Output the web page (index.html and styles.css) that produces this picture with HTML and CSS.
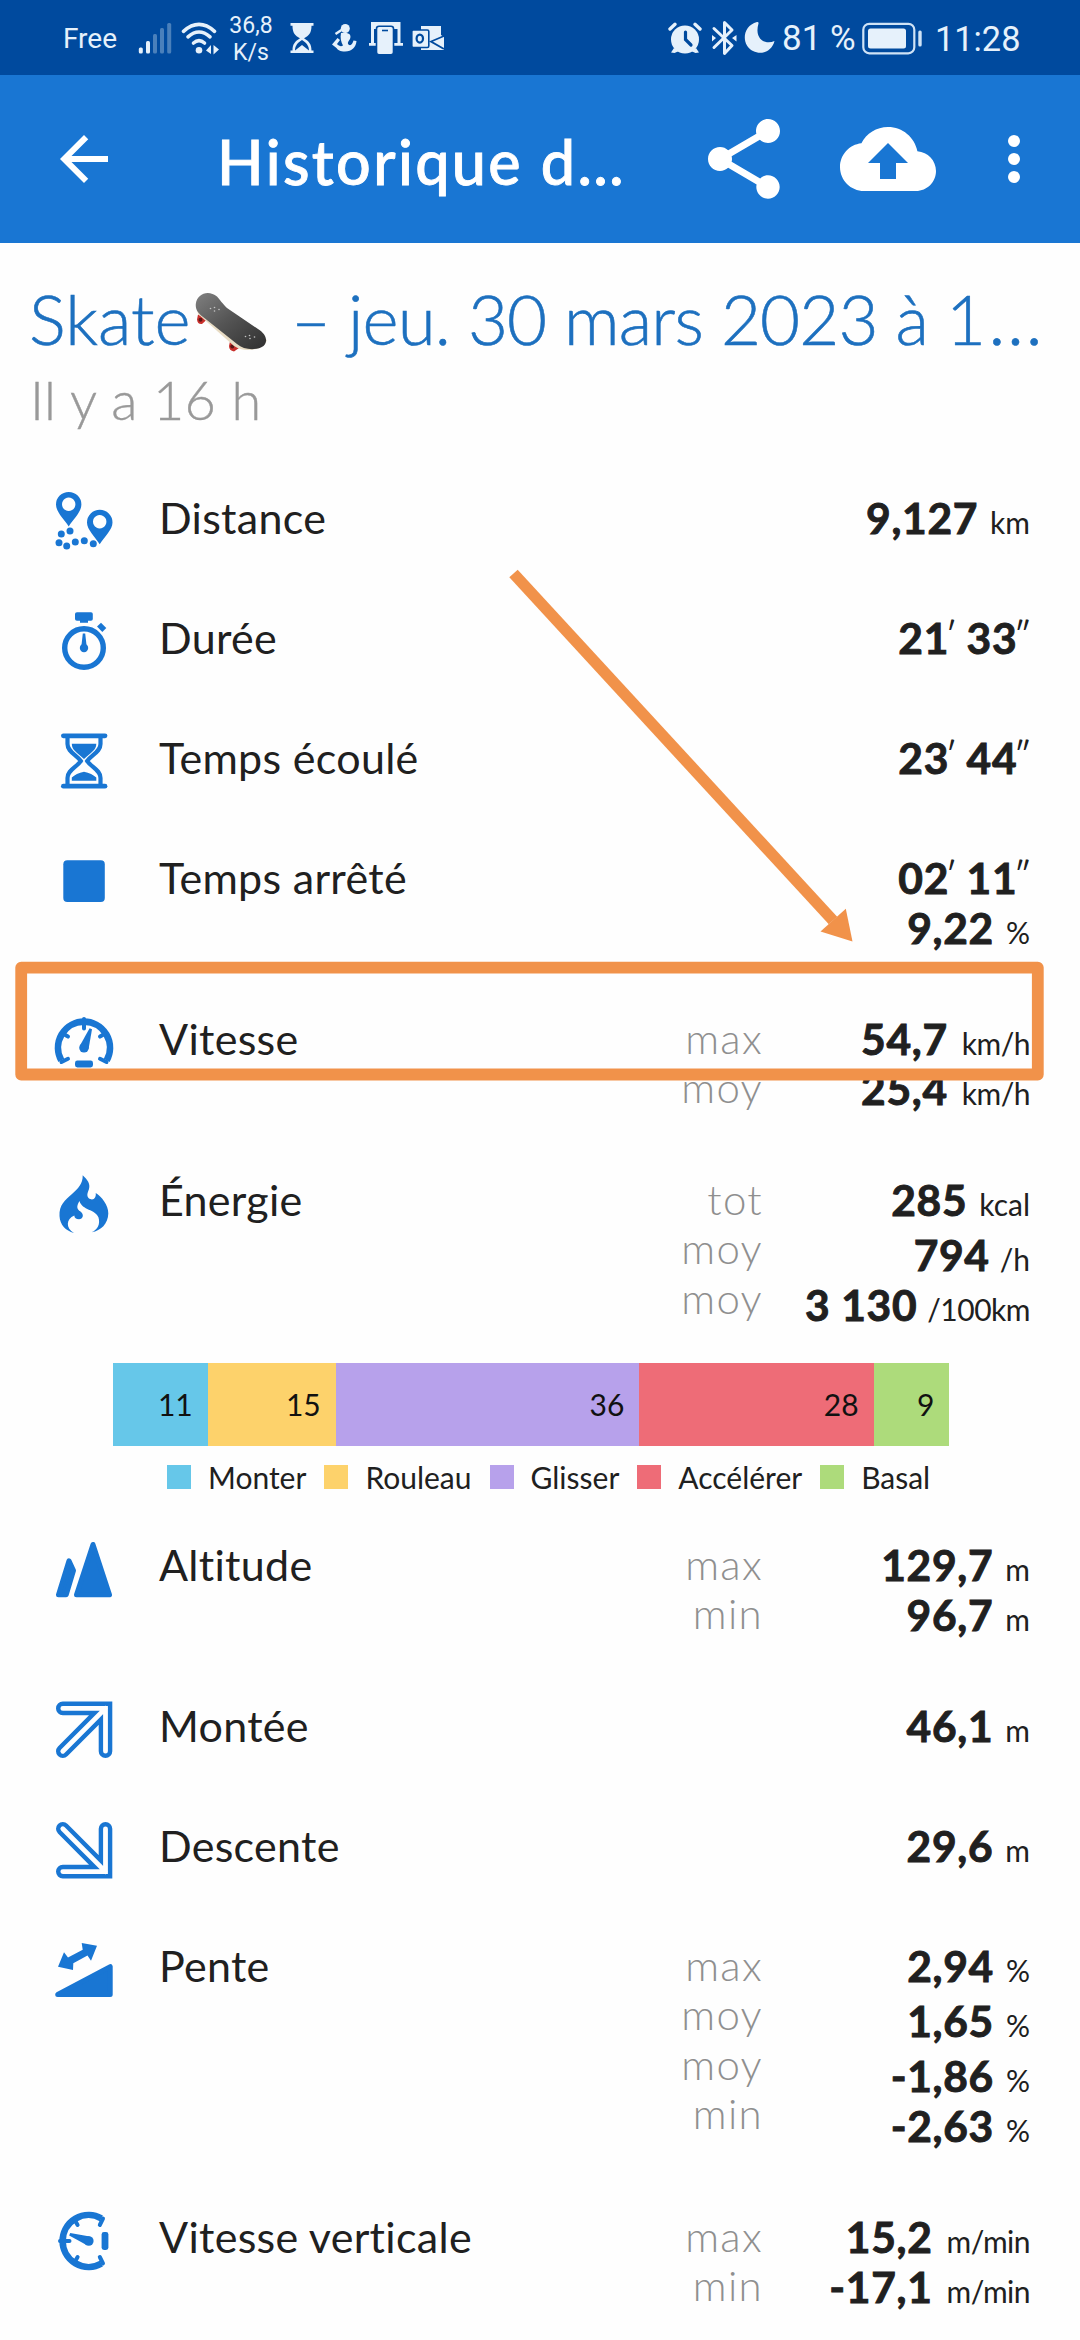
FILE: index.html
```
<!DOCTYPE html>
<html lang="fr">
<head>
<meta charset="utf-8">
<title>Historique</title>
<link rel="stylesheet" href="styles.css">
</head>
<body>
<svg width="0" height="0" class="defs" aria-hidden="true">
  <symbol id="gauge" viewBox="0 0 64 64">
    <path d="M9.3 49.3A26 26 0 1 1 54.7 49.3" fill="none" stroke="currentColor" stroke-width="6.6"/>
    <path d="M32 8V17.5M11 22.8L16 25.6M53 22.8L48 25.6M9.5 51L16 47.8M54.5 51L48 47.8" stroke="currentColor" stroke-width="4" stroke-linecap="round" fill="none"/>
    <path d="M37.6 17.2L40 18.2L36.6 37.8L27.7 35Z" fill="currentColor"/>
    <circle cx="32" cy="36.8" r="4.8" fill="currentColor"/>
    <rect x="23" y="49.6" width="18" height="6.8" rx="2.4" fill="currentColor"/>
  </symbol>
  <symbol id="arrow-ne" viewBox="0 0 64 64">
    <path d="M10.8 10.4H53.5V53.2M53.5 10.4L10.8 53.2" fill="none" stroke="currentColor" stroke-width="13.6" stroke-linecap="round"/>
    <path d="M10.8 10.4H53.5V53.2M53.5 10.4L10.8 53.2" fill="none" stroke="#fefefe" stroke-width="4.8" stroke-linecap="round"/>
  </symbol>
</svg>

<header class="statusbar">
  <div class="status-left">
    <span class="carrier">Free</span>
    <svg class="signal" viewBox="138 20 34 34" width="34" height="34"><g fill="#e6f1fb"><rect x="138.8" y="46.5" width="4" height="6" rx="1.5"/><rect x="146" y="40" width="4" height="12.5" rx="1.5"/></g><g fill="#4a80bb"><rect x="153" y="33" width="4" height="19.5" rx="1.5"/><rect x="160" y="27" width="4" height="25.5" rx="1.5"/><rect x="167.2" y="22" width="4" height="30.5" rx="1.5"/></g></svg>
    <svg class="wifi" viewBox="181 20 38 34" width="38" height="34"><g fill="none" stroke="#e6f1fb" stroke-width="3.6" stroke-linecap="round"><path d="M183.5 30.3Q199 16.5 214.5 30.3"/><path d="M188 35.8Q199 26.2 210 35.8"/><path d="M193.5 42Q199 37.3 204.5 42"/></g><circle cx="199" cy="49.3" r="3.3" fill="#e6f1fb"/><path d="M206 49.5L211 44V53ZM219 48.5L213.5 53.5V44Z" fill="#e6f1fb"/></svg>
    <div class="rate"><span>36,8</span><span>K/s</span></div>
    <svg class="hour" viewBox="290 22 24 32" width="24" height="32"><path d="M290.5 23H313.5V25.8H311.5C311.5 33 309 35.5 304 38.3C309 41.5 311.5 44 311.5 50.6H313.5V53H290.5V50.6H292.5C292.5 44 295 41.5 300 38.3C295 35.5 292.5 33 292.5 25.8H290.5Z" fill="#e6f1fb"/><path d="M295 50.5C295 45.5 298 42.5 302 40C306 42.5 309 45.5 309 50.5L302 45Z" fill="#004a9e"/></svg>
    <svg class="person" viewBox="331 23 26 30" width="26" height="30"><g fill="#e6f1fb"><circle cx="345.3" cy="28.5" r="4.5"/><path d="M341 33C348 32 352 34 350 39C348 42 347 43 349 45C352 46 353 42 353.5 40.5L356.5 41C356 47 352 51.5 345 51.5C340 51.5 338 50 336.5 48L332 44.5L337.5 38L340 40L337 44C339 46 341 47 343 45.5C341 42 340 38 341 33Z"/></g><path d="M335.5 34L341.5 30" stroke="#e6f1fb" stroke-width="2.4"/></svg>
    <svg class="devices" viewBox="368 22 36 34" width="36" height="34"><path d="M372.5 44V24.5H399V44" fill="none" stroke="#e6f1fb" stroke-width="3"/><path d="M369 45.3H377M394 45.3H403" stroke="#e6f1fb" stroke-width="2.8"/><path d="M373 26H399V30H373Z" fill="#e6f1fb"/><rect x="376.5" y="27.3" width="17" height="28.5" rx="2.5" fill="#e6f1fb" stroke="#004a9e" stroke-width="1.6"/><path d="M382 31.5H388" stroke="#004a9e" stroke-width="1.6"/></svg>
    <svg class="mail" viewBox="411 23 34 28" width="34" height="28"><path d="M421 25H441V34L444 36V49H421Z" fill="#e6f1fb"/><path d="M444 35L431 40.5L444 48" fill="none" stroke="#004a9e" stroke-width="1.8"/><rect x="411.8" y="29" width="17" height="17.5" rx="1.5" fill="#e6f1fb" stroke="#004a9e" stroke-width="1.6"/><ellipse cx="419.8" cy="37.6" rx="3.2" ry="4" fill="none" stroke="#004a9e" stroke-width="2.2"/></svg>
  </div>
  <div class="status-right">
    <svg viewBox="667 20 34 34" width="34" height="34"><g fill="#e6f1fb"><circle cx="684" cy="38.5" r="14"/><path d="M673 47L670 51.5L673.5 52L678 50ZM695 47L698 51.5L694.5 52L690 50Z"/></g><path d="M669 28L674 23.3M699 28L694 23.3" stroke="#e6f1fb" stroke-width="3.4" stroke-linecap="round"/><path d="M684.5 31V38.5L690 44" fill="none" stroke="#004a9e" stroke-width="3.2" stroke-linecap="round"/></svg>
    <svg class="bt" viewBox="710 19 26 36" width="26" height="36"><path d="M713 27.5L731 44.5L723.5 52.5V21.5L731 29L713 46.5" fill="none" stroke="#e6f1fb" stroke-width="3" stroke-linejoin="round" stroke-linecap="round"/><path d="M711 34L715 37L711 40.5ZM735.5 34L731 37L735.5 40.5Z" fill="#e6f1fb"/></svg>
    <svg class="moon" viewBox="743 21 32 33" width="32" height="33"><path d="M756 22C741 26 740 45 752 51C761 55.5 771 51 773.5 41C764 45 753 39 757.5 23.5Q757.8 21.7 756 22Z" fill="#e6f1fb"/></svg>
    <span class="pct">81 %</span>
    <svg class="batt" viewBox="861 20 61 34" width="61" height="34"><rect x="862.3" y="22.8" width="51" height="29.5" rx="6" fill="none" stroke="#cfe3f6" stroke-width="2.2"/><rect x="867" y="27.5" width="38" height="20" rx="2.5" fill="#e6f1fb"/><rect x="917.3" y="29.5" width="3.4" height="16" rx="1.5" fill="#cfe3f6"/></svg>
    <span class="clock">11:28</span>
  </div>
</header>

<nav class="appbar">
  <svg class="back" viewBox="0 0 24 24" width="72" height="72"><path d="M20 11H7.83l5.59-5.59L12 4l-8 8 8 8 1.41-1.41L7.83 13H20v-2z" fill="#fff"/></svg>
  <div class="apptitle">Historique d…</div>
  <svg class="share" viewBox="0 0 24 24" width="96" height="96"><path d="M18 16.08c-.76 0-1.44.3-1.96.77L8.91 12.7c.05-.23.09-.46.09-.7s-.04-.47-.09-.7l7.05-4.11c.54.5 1.25.81 2.04.81 1.66 0 3-1.34 3-3s-1.34-3-3-3-3 1.34-3 3c0 .24.04.47.09.7L8.04 9.81C7.5 9.31 6.79 9 6 9c-1.66 0-3 1.34-3 3s1.34 3 3 3c.79 0 1.5-.31 2.04-.81l7.12 4.16c-.05.21-.08.43-.08.65 0 1.61 1.31 2.92 2.92 2.92s2.92-1.31 2.92-2.92-1.31-2.92-2.92-2.92z" fill="#fff"/></svg>
  <svg class="cloud" viewBox="0 0 24 24" width="96" height="96"><path d="M19.35 10.04C18.67 6.59 15.64 4 12 4 9.11 4 6.6 5.64 5.35 8.04 2.34 8.36 0 10.91 0 14c0 3.31 2.69 6 6 6h13c2.76 0 5-2.24 5-5 0-2.64-2.05-4.78-4.65-4.96zM14 13v4h-4v-4H7l5-5 5 5h-3z" fill="#fff"/></svg>
  <svg class="more" viewBox="0 0 24 24" width="72" height="72"><g fill="#fff"><circle cx="12" cy="6" r="2"/><circle cx="12" cy="12" r="2"/><circle cx="12" cy="18" r="2"/></g></svg>
</nav>

<main>
  <div class="heading">
    <span class="sport">Skate</span>
    <svg class="board" viewBox="195 290 74 62" width="74" height="62">
      <defs><linearGradient id="deck" x1="0" y1="0" x2="1" y2="1"><stop offset="0" stop-color="#808080"/><stop offset=".45" stop-color="#565656"/><stop offset="1" stop-color="#2f2f2f"/></linearGradient></defs>
      <path d="M198 313.5L207 318.5L202 323Q197.5 323.5 197 318.5ZM230 340.5L239 347L234 350.5Q229 349.5 229 345Z" fill="#c9302c"/><circle cx="200.5" cy="318.8" r="2" fill="#5d1614"/><circle cx="232.3" cy="345.6" r="2" fill="#5d1614"/>
      <path d="M197 308L198 313L234 345Q244 351.5 258 347.5Q265 345 267 339Z" fill="#e8dcc4"/>
      <path d="M195.8 303C197 292 209 288.5 217 295.5C220 299 222 302 227 307L258 328C266 333 268.5 340 263.5 345C256 350 244 349 237 343L205 317.5C198 312.5 195.3 309 195.8 303Z" fill="url(#deck)"/>
      <g fill="#c4c4c4"><circle cx="210.5" cy="307.5" r=".8"/><circle cx="214.5" cy="306.5" r=".8"/><circle cx="214.5" cy="310" r=".8"/><circle cx="219" cy="308.5" r=".8"/><circle cx="245.5" cy="335.5" r=".8"/><circle cx="249.5" cy="334.5" r=".8"/><circle cx="250" cy="337.5" r=".8"/><circle cx="254.5" cy="336" r=".8"/></g>
    </svg>
    <span class="date">– jeu. 30 mars 2023 à 1<span class="more-text">…</span></span>
  </div>
  <div class="ago">Il y a 16 h</div>

  <section class="rows first">
    <div class="row">
      <svg class="ic" viewBox="0 0 64 64"><path fill-rule="evenodd" fill="currentColor" d="M16.7 36.4C12 29 4 22 4 14.6A12.7 12.7 0 0 1 29.4 14.6C29.4 22 21.4 29 16.7 36.4ZM16.7 7.6a6.7 6.7 0 1 0 .01 0ZM47.7 54.2C43 46.8 35 39.6 35 32.4A12.7 12.7 0 0 1 60.5 32.4C60.5 39.6 52.4 46.8 47.7 54.2ZM47.7 25a6.7 6.7 0 1 0 .01 0Z"/><g fill="currentColor"><circle cx="18" cy="41" r="3.5"/><circle cx="9.3" cy="44" r="3.5"/><circle cx="7" cy="52.7" r="3.5"/><circle cx="14.7" cy="56" r="3.5"/><circle cx="23.3" cy="51.9" r="3.5"/><circle cx="32.3" cy="50.8" r="3.5"/><circle cx="41.3" cy="53.7" r="3.5"/></g></svg>
      <div class="label">Distance</div>
      <div class="vals"><div>9,127<i>km</i></div></div>
    </div>
    <div class="row">
      <svg class="ic" viewBox="0 0 64 64"><circle cx="32" cy="38" r="19.3" fill="none" stroke="currentColor" stroke-width="5.4"/><path fill="currentColor" d="M25 2.3H39Q40.8 2.3 40.8 4V9Q40.8 10.7 39 10.7H36V12.7H28V10.7H25Q23 10.7 23 9V4Q23 2.3 25 2.3ZM30.8 23.5H33.2L34.5 35H29.5Z"/><circle cx="32" cy="38" r="4.2" fill="currentColor"/><rect x="46.9" y="13.5" width="5.6" height="7.5" transform="rotate(-45 49.7 17.3)" fill="currentColor"/></svg>
      <div class="label">Durée</div>
      <div class="vals"><div>21<b>′</b> 33<b>″</b></div></div>
    </div>
    <div class="row">
      <svg class="ic" viewBox="0 0 64 64"><g fill="currentColor"><rect x="9" y="3.4" width="46.4" height="4.8" rx="2.4"/><rect x="9" y="53.8" width="46.4" height="4.8" rx="2.4"/><path d="M19.8 13.7H44.3C44.3 20 39 22.5 32 29C25 22.5 19.8 20 19.8 13.7ZM19.8 50.7V47.5Q24 43.5 32 41.7Q40 43.5 44.3 47.5V50.7Z"/></g><g fill="none" stroke="currentColor" stroke-width="4.2"><path d="M15.5 6V14C15.5 22 24.5 24.5 28.8 31C24.5 37.5 15.5 40 15.5 48V56"/><path d="M48.5 6V14C48.5 22 39.5 24.5 35.2 31C39.5 37.5 48.5 40 48.5 48V56"/></g></svg>
      <div class="label">Temps écoulé</div>
      <div class="vals"><div>23<b>′</b> 44<b>″</b></div></div>
    </div>
    <div class="row">
      <svg class="ic" viewBox="0 0 64 64"><rect x="11.3" y="10.2" width="41.5" height="41.8" rx="4" fill="currentColor"/></svg>
      <div class="label">Temps arrêté</div>
      <div class="vals"><div>02<b>′</b> 11<b>″</b></div><div>9,22<i>%</i></div></div>
    </div>
    <div class="row">
      <svg class="ic"><use href="#gauge"/></svg>
      <div class="label">Vitesse</div>
      <div class="kinds"><div>max</div><div>moy</div></div>
      <div class="vals"><div>54,7<i class="tight">km/h</i></div><div>25,4<i class="tight">km/h</i></div></div>
    </div>
    <div class="row energy">
      <svg class="ic" viewBox="0 0 64 64"><path fill="currentColor" d="M30.7 3.3C35.5 8 38.5 11.5 37 17C35.5 21 34.5 23.5 36.5 26C41 29.5 44.5 26 43.7 21C49.5 24.5 56.5 33 56.3 41.5C56 52 49 58.5 39.7 60.3C45.5 57.5 48.5 52.5 46.5 45.5C43.5 37 30 38.5 27.5 29C24 34.5 25 37.5 28.5 39.5C32.5 42.5 31 47 27 47.3C24 47.3 22.5 46 22.3 43.5C14 47 13.5 56 22 61C13.5 58.5 8 53 7.5 44C7 33 13 28 20 22C26 16.5 31 12 30.7 3.3Z"/></svg>
      <div class="label">Énergie</div>
      <div class="kinds"><div>tot</div><div>moy</div><div>moy</div></div>
      <div class="vals"><div>285<i>kcal</i></div><div class="wide">794<i class="per">/h</i></div><div>3 130<i class="tight per">/100km</i></div></div>
    </div>
  </section>

  <section class="chart">
    <div class="bar">
      <span class="c1" style="width:94.7px">11</span><span class="c2" style="width:128px">15</span><span class="c3" style="width:303.7px">36</span><span class="c4" style="width:234.3px">28</span><span class="c5" style="width:75.7px">9</span>
    </div>
    <div class="legend">
      <div><span class="sw c1"></span>Monter</div><div><span class="sw c2"></span>Rouleau</div><div><span class="sw c3"></span>Glisser</div><div><span class="sw c4"></span>Accélérer</div><div><span class="sw c5"></span>Basal</div>
    </div>
  </section>

  <section class="rows">
    <div class="row">
      <svg class="ic" viewBox="0 0 64 64"><path fill="currentColor" stroke="currentColor" stroke-width="5" stroke-linejoin="round" d="M17 23.8L21.5 33.5L14.2 57.8H6.5ZM41 7.5L57.5 57.8H24.5Z"/></svg>
      <div class="label">Altitude</div>
      <div class="kinds"><div>max</div><div>min</div></div>
      <div class="vals"><div>129,7<i>m</i></div><div>96,7<i>m</i></div></div>
    </div>
    <div class="row">
      <svg class="ic"><use href="#arrow-ne"/></svg>
      <div class="label">Montée</div>
      <div class="vals"><div>46,1<i>m</i></div></div>
    </div>
    <div class="row">
      <svg class="ic flip"><use href="#arrow-ne"/></svg>
      <div class="label">Descente</div>
      <div class="vals"><div>29,6<i>m</i></div></div>
    </div>
    <div class="row">
      <svg class="ic" viewBox="0 0 64 64"><path fill="currentColor" stroke="currentColor" stroke-width="5" stroke-linejoin="round" d="M58.2 28.6V56.5H5.7Z"/><path fill="currentColor" d="M45 7.7L39 22.7L35.5 17.6L21.3 25.3L21 32L6 28.7L12 14.3L16 19.4L30.7 11.7L29.7 5Z"/></svg>
      <div class="label">Pente</div>
      <div class="kinds"><div>max</div><div>moy</div><div>moy</div><div>min</div></div>
      <div class="vals"><div>2,94<i>%</i></div><div class="wide">1,65<i>%</i></div><div class="wide">-1,86<i>%</i></div><div>-2,63<i>%</i></div></div>
    </div>
    <div class="row">
      <svg class="ic turn"><use href="#gauge"/></svg>
      <div class="label">Vitesse verticale</div>
      <div class="kinds"><div>max</div><div>min</div></div>
      <div class="vals"><div>15,2<i class="tight">m/min</i></div><div>-17,1<i class="tight">m/min</i></div></div>
    </div>
  </section>
</main>

<!-- annotation over the screen: arrow and frame round the top speed -->
<svg class="annotation" viewBox="0 0 1080 2340" width="1080" height="2340"><path d="M513.5 573.5L833 920.5" stroke="#f1924a" stroke-width="11.4"/><path d="M852.5 941.5L820.5 931.5L845.8 908.7Z" fill="#f1924a"/><rect x="21.2" y="967.6" width="1016.6" height="106.9" fill="none" stroke="#f1924a" stroke-width="11.8" stroke-linejoin="round"/></svg>
</body>
</html>
```
FILE: styles.css
```
* { box-sizing: border-box; }
body {
  margin: 0;
  width: 1080px;
  height: 2340px;
  position: relative;
  overflow: hidden;
  background: #fefefe;
  color: #202020;
  font-family: Lato, "Open Sans", sans-serif;
}
svg { display: block; flex: none; }
.defs { position: absolute; }

.statusbar {
  height: 75px;
  background: #004a9e;
  color: #e6f1fb;
  font-family: Roboto, sans-serif;
  display: flex;
  justify-content: space-between;
  padding: 0 61px 0 63px;
}
.status-left, .status-right { display: flex; align-items: center; height: 75px; }
.carrier { width: 75px; font-size: 28px; line-height: 36px; padding-top: 3px; }
.wifi { margin-left: 9px; }
.rate {
  width: 62px;
  margin-left: 1px;
  display: flex;
  flex-direction: column;
  align-items: center;
  font-size: 23px;
  line-height: 27px;
  padding-top: 2px;
}
.hour { margin-left: 8px; }
.person { margin-left: 17px; }
.devices { margin-left: 11px; }
.mail { margin-left: 7px; }
.bt { margin-left: 9px; }
.moon { margin-left: 7px; }
.pct { width: 80px; margin-left: 6px; font-size: 35px; line-height: 44px; padding-top: 3px; white-space: nowrap; }
.batt { width: 61px; }
.clock { width: 84px; margin-left: 12px; font-size: 34.3px; line-height: 44px; padding-top: 3px; }

.appbar {
  height: 168px;
  background: #1976d3;
  color: #fff;
  display: flex;
  align-items: center;
  padding-left: 48px;
}
.apptitle {
  width: 479px;
  margin-left: 97px;
  padding-top: 5px;
  font-size: 61px;
  font-weight: 500;
  letter-spacing: 2.4px;
  white-space: nowrap;
  -webkit-text-stroke: .9px currentColor;
}
.cloud { margin-left: 48px; }
.more { margin-left: 42px; }

.heading {
  display: flex;
  align-items: center;
  height: 84px;
  margin-top: 34px;
  padding-left: 29px;
  font-size: 69px;
  font-weight: 300;
  line-height: 84px;
  color: #1d70bf;
  white-space: nowrap;
  -webkit-text-stroke: .6px currentColor;
}
.sport { width: 166px; }
.board { margin-top: 5px; -webkit-text-stroke: 0; }
.date { margin-left: 22px; letter-spacing: -.85px; }
.more-text { margin-left: 3px; font-size: 76px; line-height: 1; }
.ago {
  margin-top: 9px;
  padding-left: 30px;
  font-size: 54px;
  font-weight: 300;
  line-height: 60px;
  letter-spacing: .4px;
  color: #999;
  -webkit-text-stroke: .4px currentColor;
}

.rows.first { margin-top: 33px; }
.row {
  display: grid;
  grid-template-columns: 64px 1fr 160px 267px;
  align-items: start;
  min-height: 120px;
  padding: 30px 50px 31px 52px;
}
.ic { width: 64px; height: 64px; margin: -3px 0; color: #1976d3; }
.flip { transform: scaleY(-1); }
.turn { transform: rotate(-90deg); }
.label {
  padding-left: 43px;
  font-size: 43px;
  line-height: 50px;
  letter-spacing: .3px;
  white-space: nowrap;
}
.kinds {
  grid-column: 3;
  text-align: right;
  font-size: 42px;
  font-weight: 300;
  line-height: 49.4px;
  letter-spacing: 1.3px;
  color: #8f8f8f;
}
.vals {
  grid-column: 4;
  text-align: right;
  font-size: 42.5px;
  font-weight: 700;
  line-height: 50px;
  letter-spacing: .7px;
  white-space: nowrap;
  -webkit-text-stroke: .9px currentColor;
}
.vals .wide { margin-top: 5px; }
.vals i, .vals b { font-weight: 400; line-height: 1; letter-spacing: 0; -webkit-text-stroke: 0; }
.vals i { font-style: normal; font-size: 30px; margin-left: 12px; }
.vals .tight { letter-spacing: -.5px; margin-left: 14px; }
.vals .per { margin-left: 10px; }
.vals b { font-size: 32px; vertical-align: 8px; margin: 0 -1px 0 -3px; }
.energy { height: 218px; }

.chart { height: 147px; padding: 0 113px; }
.bar { display: flex; height: 82.5px; }
.bar span { padding-right: 15px; text-align: right; font-size: 30px; line-height: 83px; color: #111; }
.legend {
  display: flex;
  gap: 18px;
  padding: 12px 0 0 54px;
  font-size: 30px;
  line-height: 38px;
}
.legend div { display: flex; align-items: center; white-space: nowrap; }
.sw { width: 24px; height: 24px; margin-right: 17px; }
.c1 { background: #66c7e9; }
.c2 { background: #fdd26b; }
.c3 { background: #b7a1eb; }
.c4 { background: #ee6c77; }
.c5 { background: #addb7b; }

.annotation { position: absolute; left: 0; top: 0; }
```
